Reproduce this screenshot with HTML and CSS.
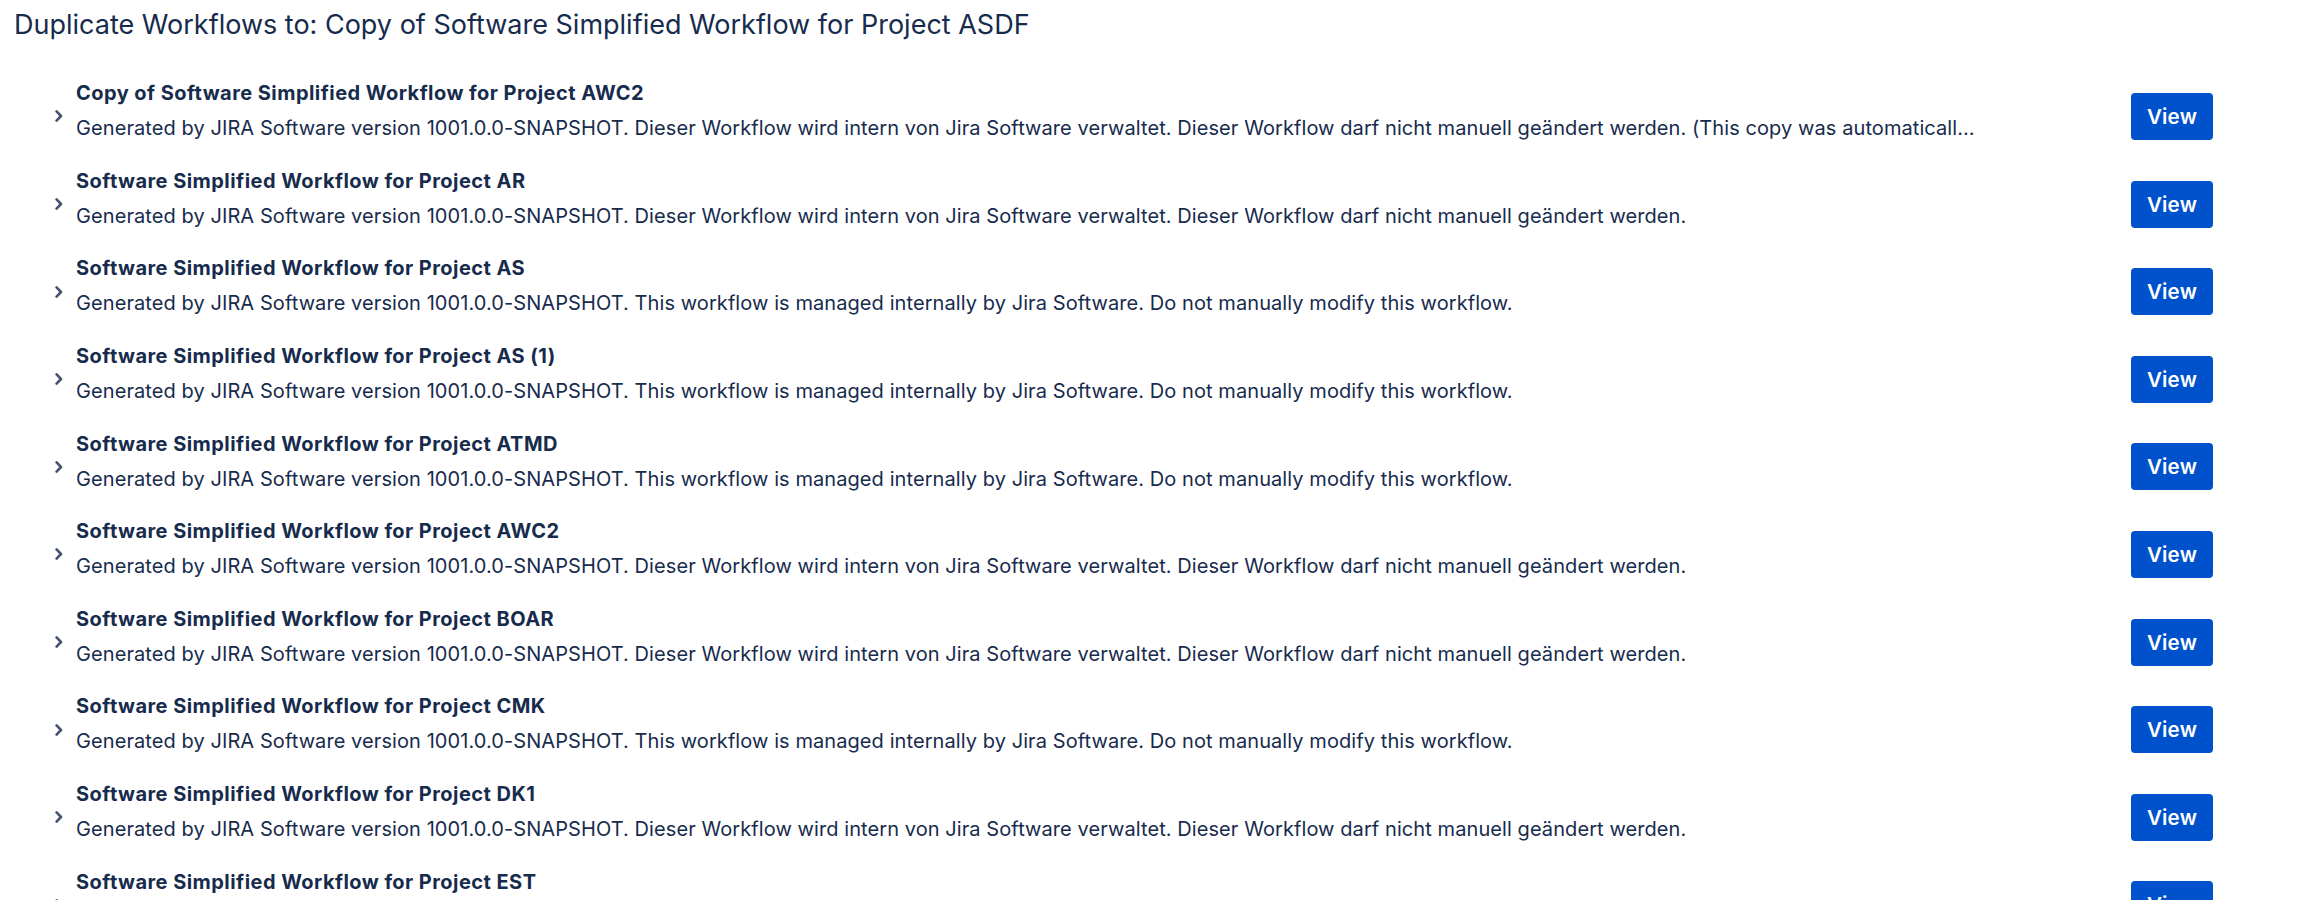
FILE: index.html
```html
<!DOCTYPE html>
<html lang="en">
<head>
<meta charset="utf-8">
<title>Duplicate Workflows</title>
<link rel="stylesheet" href="styles.css">
</head>
<body>
<div class="page">
  <h1 class="page-title">Duplicate Workflows to: Copy of Software Simplified Workflow for Project ASDF</h1>
  <ul class="wf-list">
    <li class="wf-row">
      <span class="chev"><svg viewBox="0 0 8 12" width="8" height="12"><path d="M1.6 1.4 L6 6 L1.6 10.6" fill="none" stroke="#44546F" stroke-width="2.6" stroke-linecap="round" stroke-linejoin="round"/></svg></span>
      <div class="wf-text">
        <div class="wf-name">Copy of Software Simplified Workflow for Project AWC2</div>
        <div class="wf-desc">Generated by JIRA Software version 1001.0.0-SNAPSHOT. Dieser Workflow wird intern von Jira Software verwaltet. Dieser Workflow darf nicht manuell geändert werden. (This copy was automatically generated from Software Simplified Workflow for Project AWC2)</div>
      </div>
      <button class="btn-view">View</button>
    </li>
    <li class="wf-row">
      <span class="chev"><svg viewBox="0 0 8 12" width="8" height="12"><path d="M1.6 1.4 L6 6 L1.6 10.6" fill="none" stroke="#44546F" stroke-width="2.6" stroke-linecap="round" stroke-linejoin="round"/></svg></span>
      <div class="wf-text">
        <div class="wf-name">Software Simplified Workflow for Project AR</div>
        <div class="wf-desc">Generated by JIRA Software version 1001.0.0-SNAPSHOT. Dieser Workflow wird intern von Jira Software verwaltet. Dieser Workflow darf nicht manuell geändert werden.</div>
      </div>
      <button class="btn-view">View</button>
    </li>
    <li class="wf-row">
      <span class="chev"><svg viewBox="0 0 8 12" width="8" height="12"><path d="M1.6 1.4 L6 6 L1.6 10.6" fill="none" stroke="#44546F" stroke-width="2.6" stroke-linecap="round" stroke-linejoin="round"/></svg></span>
      <div class="wf-text">
        <div class="wf-name">Software Simplified Workflow for Project AS</div>
        <div class="wf-desc">Generated by JIRA Software version 1001.0.0-SNAPSHOT. This workflow is managed internally by Jira Software. Do not manually modify this workflow.</div>
      </div>
      <button class="btn-view">View</button>
    </li>
    <li class="wf-row">
      <span class="chev"><svg viewBox="0 0 8 12" width="8" height="12"><path d="M1.6 1.4 L6 6 L1.6 10.6" fill="none" stroke="#44546F" stroke-width="2.6" stroke-linecap="round" stroke-linejoin="round"/></svg></span>
      <div class="wf-text">
        <div class="wf-name">Software Simplified Workflow for Project AS (1)</div>
        <div class="wf-desc">Generated by JIRA Software version 1001.0.0-SNAPSHOT. This workflow is managed internally by Jira Software. Do not manually modify this workflow.</div>
      </div>
      <button class="btn-view">View</button>
    </li>
    <li class="wf-row">
      <span class="chev"><svg viewBox="0 0 8 12" width="8" height="12"><path d="M1.6 1.4 L6 6 L1.6 10.6" fill="none" stroke="#44546F" stroke-width="2.6" stroke-linecap="round" stroke-linejoin="round"/></svg></span>
      <div class="wf-text">
        <div class="wf-name">Software Simplified Workflow for Project ATMD</div>
        <div class="wf-desc">Generated by JIRA Software version 1001.0.0-SNAPSHOT. This workflow is managed internally by Jira Software. Do not manually modify this workflow.</div>
      </div>
      <button class="btn-view">View</button>
    </li>
    <li class="wf-row">
      <span class="chev"><svg viewBox="0 0 8 12" width="8" height="12"><path d="M1.6 1.4 L6 6 L1.6 10.6" fill="none" stroke="#44546F" stroke-width="2.6" stroke-linecap="round" stroke-linejoin="round"/></svg></span>
      <div class="wf-text">
        <div class="wf-name">Software Simplified Workflow for Project AWC2</div>
        <div class="wf-desc">Generated by JIRA Software version 1001.0.0-SNAPSHOT. Dieser Workflow wird intern von Jira Software verwaltet. Dieser Workflow darf nicht manuell geändert werden.</div>
      </div>
      <button class="btn-view">View</button>
    </li>
    <li class="wf-row">
      <span class="chev"><svg viewBox="0 0 8 12" width="8" height="12"><path d="M1.6 1.4 L6 6 L1.6 10.6" fill="none" stroke="#44546F" stroke-width="2.6" stroke-linecap="round" stroke-linejoin="round"/></svg></span>
      <div class="wf-text">
        <div class="wf-name">Software Simplified Workflow for Project BOAR</div>
        <div class="wf-desc">Generated by JIRA Software version 1001.0.0-SNAPSHOT. Dieser Workflow wird intern von Jira Software verwaltet. Dieser Workflow darf nicht manuell geändert werden.</div>
      </div>
      <button class="btn-view">View</button>
    </li>
    <li class="wf-row">
      <span class="chev"><svg viewBox="0 0 8 12" width="8" height="12"><path d="M1.6 1.4 L6 6 L1.6 10.6" fill="none" stroke="#44546F" stroke-width="2.6" stroke-linecap="round" stroke-linejoin="round"/></svg></span>
      <div class="wf-text">
        <div class="wf-name">Software Simplified Workflow for Project CMK</div>
        <div class="wf-desc">Generated by JIRA Software version 1001.0.0-SNAPSHOT. This workflow is managed internally by Jira Software. Do not manually modify this workflow.</div>
      </div>
      <button class="btn-view">View</button>
    </li>
    <li class="wf-row">
      <span class="chev"><svg viewBox="0 0 8 12" width="8" height="12"><path d="M1.6 1.4 L6 6 L1.6 10.6" fill="none" stroke="#44546F" stroke-width="2.6" stroke-linecap="round" stroke-linejoin="round"/></svg></span>
      <div class="wf-text">
        <div class="wf-name">Software Simplified Workflow for Project DK1</div>
        <div class="wf-desc">Generated by JIRA Software version 1001.0.0-SNAPSHOT. Dieser Workflow wird intern von Jira Software verwaltet. Dieser Workflow darf nicht manuell geändert werden.</div>
      </div>
      <button class="btn-view">View</button>
    </li>
    <li class="wf-row">
      <span class="chev"><svg viewBox="0 0 8 12" width="8" height="12"><path d="M1.6 1.4 L6 6 L1.6 10.6" fill="none" stroke="#44546F" stroke-width="2.6" stroke-linecap="round" stroke-linejoin="round"/></svg></span>
      <div class="wf-text">
        <div class="wf-name">Software Simplified Workflow for Project EST</div>
        <div class="wf-desc">Generated by JIRA Software version 1001.0.0-SNAPSHOT. Dieser Workflow wird intern von Jira Software verwaltet. Dieser Workflow darf nicht manuell geändert werden.</div>
      </div>
      <button class="btn-view">View</button>
    </li>
  </ul>
</div>
</body>
</html>
```

FILE: styles.css
```css
html, body {
  margin: 0;
  padding: 0;
  background: #ffffff;
}

body {
  font-family: Inter, "Noto Sans", "Liberation Sans", sans-serif;
  color: #172B4D;
  overflow: hidden;
  height: 900px;
}

.page {
  padding: 9px 0 0 14px;
}

.page-title {
  margin: 0;
  font-size: 27px;
  line-height: 32px;
  font-weight: 400;
  color: #172B4D;
  letter-spacing: 0;
}

.wf-list {
  list-style: none;
  margin: 30.7px 0 0 0;
  padding: 0 87px 0 41px;
}

.wf-row {
  display: flex;
  align-items: center;
  height: 87.6px;
}

.chev {
  flex: 0 0 8px;
  width: 8px;
  height: 12px;
  display: flex;
  margin-top: 2px;
}

.chev svg {
  display: block;
}

.wf-text {
  flex: 1 1 auto;
  min-width: 0;
  align-self: flex-start;
  margin: 4.5px 155px 0 13px;
}

.wf-name {
  font-size: 20px;
  line-height: 35px;
  font-weight: 700;
  letter-spacing: 0.45px;
  white-space: nowrap;
  overflow: hidden;
  text-overflow: ellipsis;
}

.wf-desc {
  font-size: 20px;
  line-height: 35px;
  font-weight: 400;
  letter-spacing: 0.08px;
  white-space: nowrap;
  overflow: hidden;
  text-overflow: ellipsis;
}

.btn-view {
  flex: 0 0 82px;
  width: 82px;
  height: 47px;
  margin-top: 2px;
  border: none;
  border-radius: 4px;
  background: #0052CC;
  color: #ffffff;
  font-family: Inter, "Noto Sans", "Liberation Sans", sans-serif;
  font-size: 20.5px;
  font-weight: 600;
  letter-spacing: 0.2px;
  padding: 0;
  cursor: pointer;
}
```
